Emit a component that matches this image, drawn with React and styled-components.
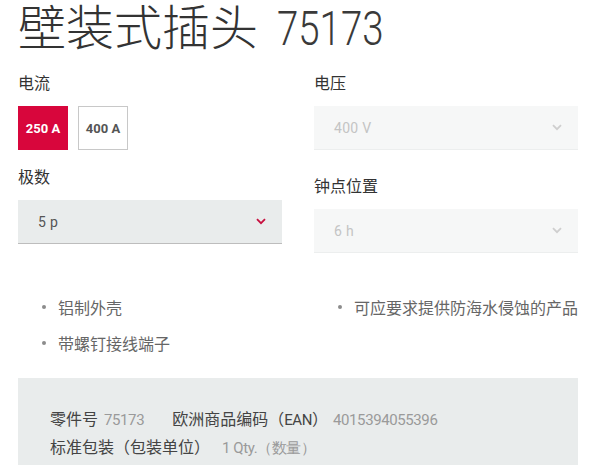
import React from "react";
import styled, { createGlobalStyle } from "styled-components";

const GlobalStyle = createGlobalStyle`
  body {
    margin: 0;
    background: #fff;
    font-family: "Noto Sans", "Noto Sans CJK SC", sans-serif;
    color: #333;
  }
`;

const Page = styled.div`
  padding: 0 18px;
  width: 596px;
  box-sizing: border-box;
  overflow: hidden;
  height: 465px;
`;

const Title = styled.h1`
  margin: 0;
  font-size: 48px;
  line-height: 48px;
  font-weight: 300;
  color: #333;
  font-family: "Noto Sans CJK SC", sans-serif;
  white-space: nowrap;
`;

// the site uses a condensed latin face; squeeze Roboto to match its width
const TitleNum = styled.span`
  display: inline-block;
  font-family: "Roboto", sans-serif;
  font-weight: 300;
  color: #3a3a3a;
  transform: scaleX(0.8);
  transform-origin: left center;
  margin-left: 8px;
`;

const Grid = styled.div`
  display: grid;
  grid-template-columns: 264px 264px;
  column-gap: 32px;
  margin-top: 17px;
`;

const Column = styled.div`
  display: flex;
  flex-direction: column;
`;

const Label = styled.div`
  font-family: "Noto Sans CJK SC", sans-serif;
  font-size: 16px;
  line-height: 24px;
  color: #333;
  margin-top: ${(p) => p.$top || 0}px;
  margin-bottom: 12px;
`;

const ButtonRow = styled.div`
  display: flex;
  gap: 10px;
`;

const OptionButton = styled.button`
  width: 50px;
  height: 44px;
  box-sizing: border-box;
  border: 1px solid ${(p) => (p.$active ? "#d8063c" : "#c8c8c8")};
  background: ${(p) => (p.$active ? "#d8063c" : "#fff")};
  color: ${(p) => (p.$active ? "#fff" : "#555")};
  font-family: "Roboto", "Liberation Sans", sans-serif;
  font-weight: 700;
  font-size: 13px;
  padding: 0;
  cursor: pointer;
`;

const Select = styled.div`
  height: 44px;
  box-sizing: border-box;
  display: flex;
  align-items: center;
  justify-content: space-between;
  padding: 0 16px 0 20px;
  background: ${(p) => (p.$disabled ? "#f6f7f7" : "#e9ecec")};
  border-bottom: 1px solid ${(p) => (p.$disabled ? "#eceeee" : "#bdbdbd")};
  color: ${(p) => (p.$disabled ? "#c4c4c4" : "#555")};
  font-family: "Roboto", "Noto Sans", sans-serif;
  font-size: 14px;
  letter-spacing: 0.3px;
`;

const Chevron = ({ color }) => (
  <svg width="10" height="7" viewBox="0 0 10 7">
    <path d="M1 1.2 L5 5.2 L9 1.2" fill="none" stroke={color} strokeWidth="1.8" />
  </svg>
);

const Features = styled.div`
  display: grid;
  grid-template-columns: 264px 264px;
  column-gap: 32px;
  margin-top: 42px;
`;

const List = styled.ul`
  margin: 0;
  padding: 0 0 0 40px;
  list-style: none;
`;

const Item = styled.li`
  position: relative;
  font-family: "Noto Sans CJK SC", sans-serif;
  font-size: 16px;
  line-height: 24px;
  color: #666;
  margin-bottom: 12px;
  white-space: nowrap;

  &::before {
    content: "";
    position: absolute;
    left: -16px;
    top: 10px;
    width: 4px;
    height: 4px;
    border-radius: 50%;
    background: #8c8c8c;
  }
`;

const InfoBox = styled.div`
  margin-top: 11px;
  background: #e9ecec;
  padding: 26px 32px 30px;
`;

const InfoLine = styled.div`
  display: flex;
  align-items: baseline;
  height: 28px;
  line-height: 28px;
  white-space: nowrap;
`;

const InfoLabel = styled.span`
  font-family: "Noto Sans CJK SC", sans-serif;
  font-size: 16px;
  color: #444;
`;

const InfoValue = styled.span`
  font-family: "Roboto", sans-serif;
  font-size: 15px;
  letter-spacing: -0.4px;
  color: #9a9a9a;
  margin-left: ${(p) => p.$gap || 6}px;
  margin-right: ${(p) => p.$after || 0}px;
`;

const Narrow = styled.span`
  font-family: "Roboto", sans-serif;
  font-size: 15px;
  letter-spacing: -0.4px;
`;

export default function App() {
  return (
    <>
      <GlobalStyle />
      <Page>
        <Title>
          壁装式插头 <TitleNum>75173</TitleNum>
        </Title>
        <Grid>
          <Column>
            <Label>电流</Label>
            <ButtonRow>
              <OptionButton $active>250 A</OptionButton>
              <OptionButton>400 A</OptionButton>
            </ButtonRow>
            <Label $top={14}>极数</Label>
            <Select>
              <span>5 p</span>
              <Chevron color="#c8103f" />
            </Select>
          </Column>
          <Column>
            <Label>电压</Label>
            <Select $disabled>
              <span>400 V</span>
              <Chevron color="#cfcfcf" />
            </Select>
            <Label $top={23}>钟点位置</Label>
            <Select $disabled>
              <span>6 h</span>
              <Chevron color="#cfcfcf" />
            </Select>
          </Column>
        </Grid>
        <Features>
          <List>
            <Item>铝制外壳</Item>
            <Item>带螺钉接线端子</Item>
          </List>
          <List>
            <Item>可应要求提供防海水侵蚀的产品</Item>
          </List>
        </Features>
        <InfoBox>
          <InfoLine>
            <InfoLabel>零件号</InfoLabel>
            <InfoValue $after={28}>75173</InfoValue>
            <InfoLabel>
              欧洲商品编码（<Narrow>EAN</Narrow>）
            </InfoLabel>
            <InfoValue $gap={5}>4015394055396</InfoValue>
          </InfoLine>
          <InfoLine>
            <InfoLabel>标准包装（包装单位）</InfoLabel>
            <InfoValue $gap={12}>1 Qty.（数量）</InfoValue>
          </InfoLine>
        </InfoBox>
      </Page>
    </>
  );
}
